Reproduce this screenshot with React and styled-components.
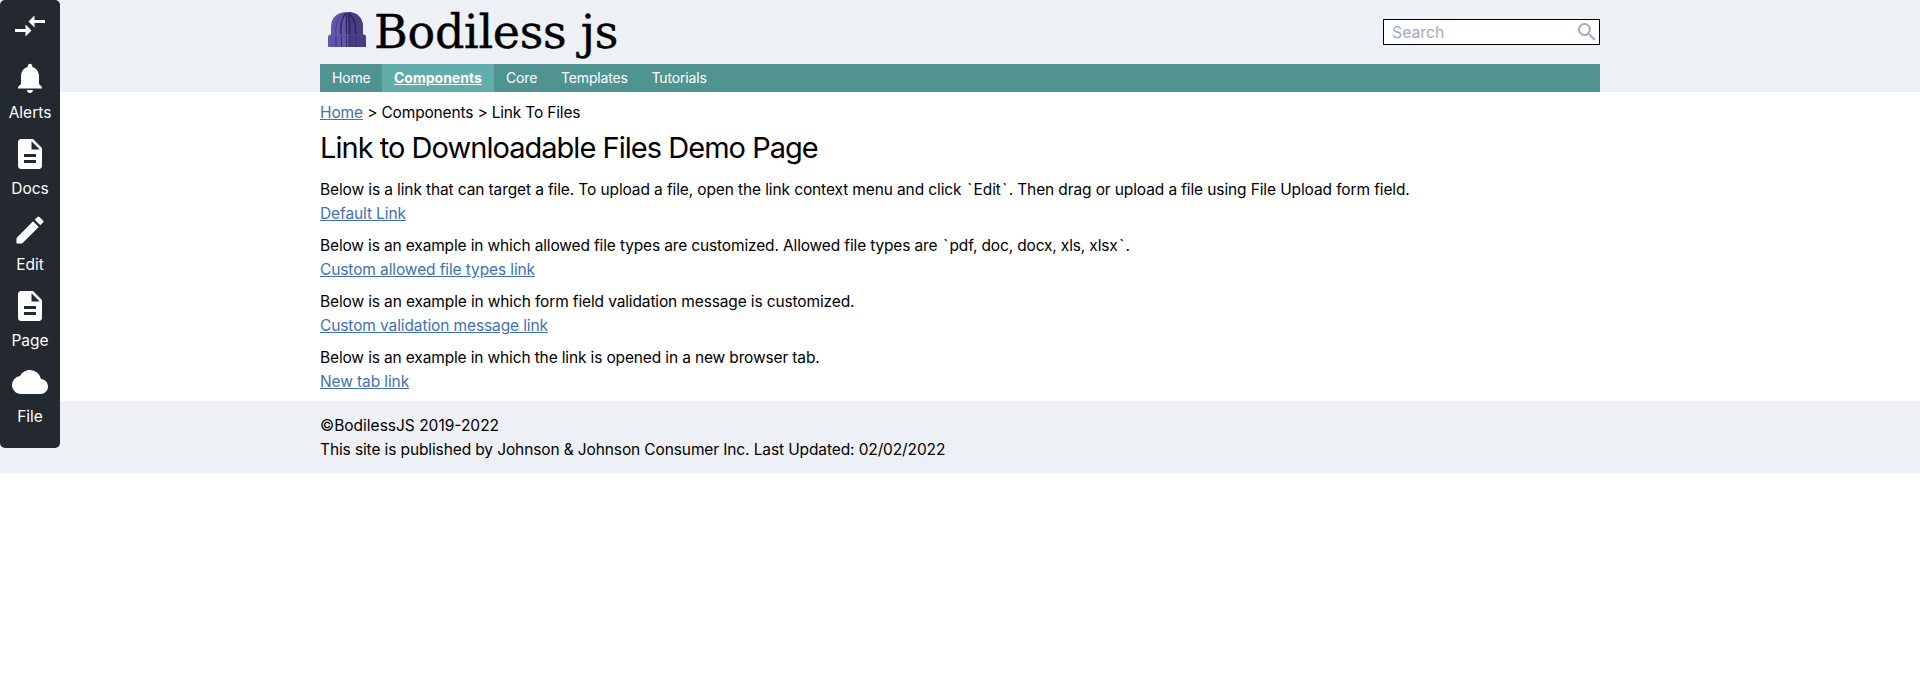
import React from 'react';
import styled, { createGlobalStyle } from 'styled-components';
import { MdCompareArrows, MdNotifications, MdDescription, MdEdit, MdCloud, MdSearch } from 'react-icons/md';

const GlobalStyle = createGlobalStyle`
  *, *::before, *::after { box-sizing: border-box; }
  body {
    margin: 0;
    background: #fff;
    color: #000;
    font: 400 15.5px/24px Inter, "Liberation Sans", sans-serif;
  }
  h1, p { margin: 0; padding: 0; font-weight: 400; }
`;

const Sidebar = styled.aside`
  position: fixed;
  top: 0;
  left: 0;
  z-index: 10;
  width: 60px;
  padding: 8px 0 19px;
  display: flex;
  flex-direction: column;
  align-items: center;
  gap: 11px;
  border-radius: 5px;
  background: #23292f;
  color: #fff;
`;

const Toggle = styled.button`
  display: flex;
  margin: 0 0 5px;
  padding: 0;
  border: 0;
  background: none;
  color: inherit;
`;

const Tool = styled.div`
  display: flex;
  flex-direction: column;
  align-items: center;
  gap: 5px;
`;

const ToolLabel = styled.span`
  white-space: nowrap;
`;

const Container = styled.div`
  width: 1280px;
  margin: 0 auto;
`;

const Header = styled.header`
  background: #edf0f5;
`;

const Brand = styled.div`
  height: 64px;
  display: flex;
  align-items: center;
  justify-content: space-between;
`;

const Logo = styled.a`
  display: flex;
  align-items: center;
  gap: 8px;
  padding-left: 8px;
`;

const HatIcon = styled.svg`
  margin-bottom: 5px;
`;

const LogoText = styled.span`
  font: 400 46px/60px "DejaVu Serif", serif;
  letter-spacing: -0.3px;
  white-space: nowrap;
  -webkit-text-stroke: 0.4px #000;
`;

const SearchBox = styled.div`
  width: 217px;
  height: 26px;
  display: flex;
  align-items: center;
  justify-content: space-between;
  padding-left: 8px;
  border: 1px solid #000;
  background: #fff;
  color: #a1abbb;
`;

const Placeholder = styled.span`
  padding-top: 2px;
  font-size: 15.8px;
`;

const Nav = styled.nav`
  display: flex;
  height: 28px;
  background: #4f9491;
`;

const NavItem = styled.a`
  padding: 4px 12px;
  width: ${(p) => p.$width}px;
  font-size: 14px;
  line-height: 20px;
  color: #fff;
  white-space: nowrap;
  background: ${(p) => (p.$active ? '#60adab' : 'transparent')};
  font-weight: ${(p) => (p.$active ? 700 : 400)};
  letter-spacing: ${(p) => (p.$active ? 0 : -0.15)}px;
  text-decoration: ${(p) => (p.$active ? 'underline' : 'none')};
`;

const Main = styled(Container).attrs({ as: 'main' })`
  padding: 9px 0 7px;
`;

const Link = styled.a`
  color: #3f71b0;
  text-decoration: underline;
  letter-spacing: -0.11px;
`;

const Title = styled.h1`
  font-size: 29px;
  line-height: 45px;
  letter-spacing: -0.97px;
`;

const Text = styled.p`
  letter-spacing: ${(p) => p.$track || 0}px;
  white-space: nowrap;
`;

const Tick = styled.span`
  padding: 0 1.5px;
`;

const Demo = styled.section`
  padding-top: 8px;
`;

const Footer = styled.footer`
  padding: 13px 0 11px;
  background: #edf0f5;
`;

const tools = [
  { label: 'Alerts', Icon: MdNotifications },
  { label: 'Docs', Icon: MdDescription },
  { label: 'Edit', Icon: MdEdit },
  { label: 'Page', Icon: MdDescription },
  { label: 'File', Icon: MdCloud },
];

const navItems = [
  { label: 'Home', width: 62 },
  { label: 'Components', width: 112, active: true },
  { label: 'Core', width: 55 },
  { label: 'Templates', width: 90.5 },
  { label: 'Tutorials', width: 79 },
];

const demos = [
  {
    text: <>Below is a link that can target a file. To upload a file, open the link context menu and click <Tick>`</Tick>Edit<Tick>`</Tick>. Then drag or upload a file using File Upload form field.</>,
    track: -0.117,
    link: 'Default Link',
  },
  {
    text: <>Below is an example in which allowed file types are customized. Allowed file types are <Tick>`</Tick>pdf, doc, docx, xls, xlsx<Tick>`</Tick>.</>,
    track: -0.145,
    link: 'Custom allowed file types link',
  },
  {
    text: 'Below is an example in which form field validation message is customized.',
    track: -0.135,
    link: 'Custom validation message link',
  },
  {
    text: 'Below is an example in which the link is opened in a new browser tab.',
    track: -0.143,
    link: 'New tab link',
  },
];

function Hat() {
  return (
    <HatIcon width="38" height="35" viewBox="0 0 38 35">
      <path d="M3 24V15C3 5 10 0 19 0s16 5 16 15v9z" fill="#6056ac" />
      <path d="M20 0c9 0 15 6 15 15v9H20z" fill="#483e86" />
      <path d="M13 24C12 13 13 6 18 1M18.500 24V2M21.500 24C22 13 22 7 20 1M27.500 24C28 13 27 7 21 1" fill="none" stroke="#2c2656" strokeWidth="1.400" />
      <path d="M8 24C7 14 9 6 15 2M31.500 24C32 13 29 6 23 2" fill="none" stroke="#483e86" strokeWidth="1" />
      <path d="M3 22.500h32a3 3 0 0 1 3 3V34a1 1 0 0 1-1 1H1a1 1 0 0 1-1-1v-8.500a3 3 0 0 1 3-3z" fill="#6056ac" />
      <path d="M20 22.500h15a3 3 0 0 1 3 3V34a1 1 0 0 1-1 1H20z" fill="#483e86" />
      <path d="M8 24v11M13.500 24v11M18.500 24v11M22 24v11M28 24v11" stroke="#3b3272" strokeWidth="1" />
    </HatIcon>
  );
}

export default function App() {
  return (
    <>
      <GlobalStyle />
      <Sidebar>
        <Toggle aria-label="Switch side"><MdCompareArrows size={36} /></Toggle>
        {tools.map(({ label, Icon }) => (
          <Tool key={label}>
            <Icon size={36} />
            <ToolLabel>{label}</ToolLabel>
          </Tool>
        ))}
      </Sidebar>
      <Header>
        <Container>
          <Brand>
            <Logo>
              <Hat />
              <LogoText>Bodiless js</LogoText>
            </Logo>
            <SearchBox>
              <Placeholder>Search</Placeholder>
              <MdSearch size={24} />
            </SearchBox>
          </Brand>
          <Nav>
            {navItems.map((n) => (
              <NavItem key={n.label} $width={n.width} $active={n.active}>{n.label}</NavItem>
            ))}
          </Nav>
        </Container>
      </Header>
      <Main>
        <Text $track={-0.17}><Link>Home</Link> &gt; Components &gt; Link To Files</Text>
        <Title>Link to Downloadable Files Demo Page</Title>
        {demos.map((d) => (
          <Demo key={d.link}>
            <Text $track={d.track}>{d.text}</Text>
            <Link>{d.link}</Link>
          </Demo>
        ))}
      </Main>
      <Footer>
        <Container>
          <Text>©BodilessJS 2019-2022</Text>
          <Text $track={-0.115}>This site is published by Johnson &amp; Johnson Consumer Inc. Last Updated: 02/02/2022</Text>
        </Container>
      </Footer>
    </>
  );
}
